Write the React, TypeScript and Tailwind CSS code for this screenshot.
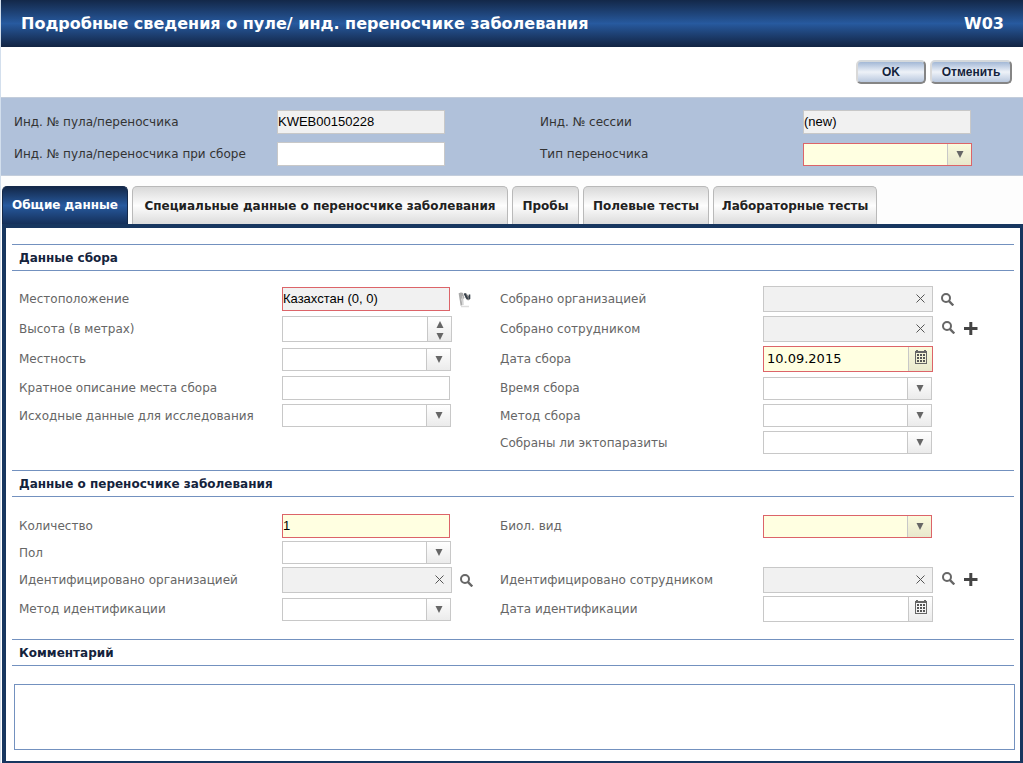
import React from 'react';

const INPUT_FONT = "font-['Liberation_Sans',Arial,sans-serif] text-[13px]";

type TextProps = { id: string; value?: string; readOnly?: boolean; required?: boolean };

function TextField({ id, value = '', readOnly, required }: TextProps) {
  const fill = readOnly ? 'bg-[#f1f1f1]' : required ? 'bg-[#ffffe1]' : 'bg-white';
  const edge = required ? 'border-[#dc6469]' : 'border-[#c8c8c8]';
  return (
    <input
      id={id}
      type="text"
      defaultValue={value}
      readOnly={readOnly}
      className={`h-6 w-[168px] border pb-px text-black outline-none ${INPUT_FONT} ${fill} ${edge}`}
    />
  );
}

function Triangle({ up = false }: { up?: boolean }) {
  return (
    <svg width="8" height="7" viewBox="0 0 8 7" aria-hidden="true">
      <path d={up ? 'M4 0 7.5 7h-7z' : 'M.5 0h7L4 7z'} fill="#666" />
    </svg>
  );
}

function SelectField({ id, required }: { id: string; required?: boolean }) {
  return (
    <div className="relative h-[23px] w-[169px]">
      <select
        id={id}
        className={`block h-full w-full appearance-none border pl-1 pr-6 outline-none ${
          required ? 'border-[#dc6469] bg-[#ffffe1]' : 'border-[#c8c8c8] bg-white'
        }`}
      >
        <option value=""></option>
      </select>
      <span
        className={`pointer-events-none absolute inset-y-px right-px flex w-6 items-center justify-center border-l border-[#c8c8c8] bg-linear-to-b ${
          required ? 'from-[#fbfbdd] to-[#e8e8cd]' : 'from-white to-[#ebebeb]'
        }`}
      >
        <Triangle />
      </span>
    </div>
  );
}

function NumberField({ id }: { id: string }) {
  return (
    <div className="flex h-[26px] w-[170px] border border-[#c8c8c8] bg-white">
      <input id={id} type="text" inputMode="numeric" className={`min-w-0 flex-1 px-1 outline-none ${INPUT_FONT}`} />
      <div className="flex w-6 flex-col border-l border-[#c8c8c8] bg-linear-to-b from-white to-[#ebebeb]">
        <button type="button" aria-label="Увеличить" className="flex h-3 items-end justify-center pb-px">
          <Triangle up />
        </button>
        <button type="button" aria-label="Уменьшить" className="flex h-3 items-end justify-center pb-px">
          <Triangle />
        </button>
      </div>
    </div>
  );
}

function CalendarIcon() {
  return (
    <svg width="12" height="14" viewBox="0 0 12 14" shapeRendering="crispEdges" aria-hidden="true">
      <path
        fill="#666"
        fillRule="evenodd"
        d="M0 1h1V0h2v1h6V0h2v1h1v13H0zM1 3v10h10V3z"
      />
      <path
        fill="#555"
        d="M2 4h2v2H2zM5 4h2v2H5zM8 4h2v2H8zM2 7h2v2H2zM5 7h2v2H5zM8 7h2v2H8zM2 10h2v2H2zM5 10h2v2H5zM8 10h2v2H8z"
      />
    </svg>
  );
}

function DateField({ id, value = '', required }: TextProps) {
  return (
    <div
      className={`flex h-[26px] w-[170px] border ${
        required ? 'border-[#dc6469] bg-[#ffffe1]' : 'border-[#c8c8c8] bg-white'
      }`}
    >
      <input
        id={id}
        type="text"
        defaultValue={value}
        className="min-w-0 flex-1 px-[3px] text-[13px] text-black outline-none"
      />
      <button
        type="button"
        aria-label="Открыть календарь"
        className={`flex w-6 justify-center border-l border-[#c8c8c8] bg-linear-to-b pt-[3px] ${
          required ? 'from-[#fbfbdd] to-[#e8e8cd]' : 'from-white to-[#ebebeb]'
        }`}
      >
        <CalendarIcon />
      </button>
    </div>
  );
}

function SearchIcon() {
  return (
    <svg width="13" height="13" viewBox="0 0 13 13" fill="none" stroke="#666" aria-hidden="true">
      <circle cx="5" cy="5" r="4" strokeWidth="2" />
      <path d="M8 8.2 12.3 12.4" strokeWidth="2.4" />
    </svg>
  );
}

function PlusIcon() {
  return (
    <svg width="14" height="13" viewBox="0 0 14 13" aria-hidden="true">
      <path d="M5.3 0h3v5H13.5v3H8.3v5h-3V8H0V5h5.3z" fill="#444" />
    </svg>
  );
}

function LookupField({ id, addable }: { id: string; addable?: boolean }) {
  return (
    <div className="flex items-center">
      <div className="flex h-[26px] w-[170px] border border-[#c8c8c8] bg-[#f1f1f1]">
        <input id={id} type="text" readOnly className={`min-w-0 flex-1 px-1 outline-none ${INPUT_FONT}`} />
        <button type="button" aria-label="Очистить" className="flex w-6 justify-center pt-[7px]">
          <svg width="9" height="9" viewBox="0 0 9 9" stroke="#555" aria-hidden="true">
            <path d="M.5.5l8 8M8.5.5l-8 8" />
          </svg>
        </button>
      </div>
      <button type="button" aria-label="Найти" className={addable ? 'ml-[9px] pb-1' : 'ml-2 pt-px'}>
        <SearchIcon />
      </button>
      {addable && (
        <button type="button" aria-label="Добавить" className="ml-[9px] pb-0.5">
          <PlusIcon />
        </button>
      )}
    </div>
  );
}

function LocationField({ id }: { id: string }) {
  return (
    <div className="flex items-center">
      <TextField id={id} value="Казахстан (0, 0)" readOnly required />
      <button type="button" aria-label="Показать на карте" className="ml-2">
        <svg width="13" height="17" viewBox="0 0 13 17" aria-hidden="true">
          <path d="M1.500 2 3.500 14.500" stroke="#aaa" strokeWidth="1.800" />
          <path d="M3 15.500h8" stroke="#ddd" strokeWidth="1.500" />
          <path d="M1 2.500c1.500-1.800 3-1 4-.5l1.500 5-1.500 1-2-.5z" fill="#aaa" />
          <path d="M6 2.500 8 2l2.500 3L12 3.500v5L10 9.500 7.500 7z" fill="#888" />
          <path d="M6.500 2.500 9.500 8M11.500 3.500v4.500" stroke="#333e48" strokeWidth="1.600" />
          <path d="M4.500 5 5 14" stroke="#ccc" strokeWidth="1.300" />
        </svg>
      </button>
    </div>
  );
}

function Label({ htmlFor, children }: { htmlFor: string; children: React.ReactNode }) {
  return (
    <label htmlFor={htmlFor} className="whitespace-nowrap leading-4">
      {children}
    </label>
  );
}

function SectionTitle({ children }: { children: React.ReactNode }) {
  return (
    <h2 className="mr-px border-y border-[#7391bf] px-[7px] pb-1 pt-[5px] text-[12px] font-bold leading-4 text-[#14233c]">
      {children}
    </h2>
  );
}

const GRID = 'grid grid-cols-[263fr_218fr_263fr_252fr] items-center pl-[7px] text-[12px] text-[#666]';

const TABS = [
  { title: 'Специальные данные о переносчике заболевания', width: 'w-[376px]' },
  { title: 'Пробы', width: 'w-[67px]' },
  { title: 'Полевые тесты', width: 'w-[126px]' },
  { title: 'Лабораторные тесты', width: 'w-[164px]' },
];

export default function App() {
  return (
    <form className="border-l border-[#d3dfed] bg-white font-['DejaVu_Sans',Verdana,sans-serif] text-[12px]">
      <header className="flex h-[47px] items-center justify-between bg-linear-to-b from-[#132849] via-[#275a9f] to-[#122443] pl-5 pr-[19px] text-[16px] font-bold text-white">
        <h1>Подробные сведения о пуле/ инд. переносчике заболевания</h1>
        <span>W03</span>
      </header>

      <div className="flex h-[50px] items-center justify-end gap-1 pr-[11px] font-['Liberation_Sans',Arial,sans-serif] text-[12px] font-bold text-[#14233c]">
        <button
          type="button"
          className="h-6 w-[70px] rounded-[5px] border-2 border-t-[#d5d9dc] border-l-[#d9d9d9] border-r-[#858585] border-b-[#858585] bg-linear-to-b from-[#a3b8d6] via-[#eef2f8] to-[#b9c8de]"
        >
          OK
        </button>
        <button
          type="button"
          className="h-6 w-[82px] rounded-[5px] border-2 border-t-[#d5d9dc] border-l-[#d9d9d9] border-r-[#858585] border-b-[#858585] bg-linear-to-b from-[#a3b8d6] via-[#eef2f8] to-[#b9c8de]"
        >
          Отменить
        </button>
      </div>

      <div className="grid grid-cols-[263fr_263fr_263fr_220fr] items-center gap-y-2 border-y border-[#c3cddb] bg-[#b0c1da] pb-[9px] pl-[13px] pt-3 text-[#333]">
        <Label htmlFor="pool-id">Инд. № пула/переносчика</Label>
        <TextField id="pool-id" value="KWEB00150228" readOnly />
        <Label htmlFor="session-id">Инд. № сессии</Label>
        <TextField id="session-id" value="(new)" readOnly />
        <Label htmlFor="field-id">Инд. № пула/переносчика при сборе</Label>
        <TextField id="field-id" />
        <Label htmlFor="vector-type">Тип переносчика</Label>
        <SelectField id="vector-type" required />
      </div>

      <div role="tablist" className="flex gap-1 bg-[#fdfdfd] pl-px pt-2.5 font-bold">
        <button
          type="button"
          role="tab"
          aria-selected="true"
          className="h-[38px] w-[126px] whitespace-nowrap rounded-t-[5px] border border-b-0 border-[#14294a] bg-linear-to-b from-[#132849] via-[#275a9f] to-[#15305a] pb-px text-white"
        >
          Общие данные
        </button>
        {TABS.map((tab) => (
          <button
            key={tab.title}
            type="button"
            role="tab"
            aria-selected="false"
            className={`h-[38px] whitespace-nowrap rounded-t-[5px] border border-b-0 border-[#b9b9b9] bg-linear-to-b from-[#d9d9d9] via-[#fdfdfd] to-[#dcdcdc] text-[#222] ${tab.width}`}
          >
            {tab.title}
          </button>
        ))}
      </div>

      <main className="ml-px border-4 border-r-3 border-b-2 border-[#17365f] pb-[11px] pl-1.5 pr-[5px] pt-4">
        <SectionTitle>Данные сбора</SectionTitle>
        <div className={`${GRID} gap-y-1 pb-4 pt-[15px]`}>
          <Label htmlFor="location">Местоположение</Label>
          <LocationField id="location" />
          <Label htmlFor="collected-org">Собрано организацией</Label>
          <LookupField id="collected-org" />

          <Label htmlFor="elevation">Высота (в метрах)</Label>
          <NumberField id="elevation" />
          <Label htmlFor="collected-person">Собрано сотрудником</Label>
          <LookupField id="collected-person" addable />

          <Label htmlFor="surroundings">Местность</Label>
          <SelectField id="surroundings" />
          <Label htmlFor="collection-date">Дата сбора</Label>
          <DateField id="collection-date" value="10.09.2015" required />

          <Label htmlFor="site-description">Кратное описание места сбора</Label>
          <TextField id="site-description" />
          <Label htmlFor="collection-time">Время сбора</Label>
          <SelectField id="collection-time" />

          <Label htmlFor="basis">Исходные данные для исследования</Label>
          <SelectField id="basis" />
          <Label htmlFor="collection-method">Метод сбора</Label>
          <SelectField id="collection-method" />

          <div className="col-start-3 flex">
            <Label htmlFor="ectoparasites">Собраны ли эктопаразиты</Label>
          </div>
          <SelectField id="ectoparasites" />
        </div>

        <SectionTitle>Данные о переносчике заболевания</SectionTitle>
        <div className={`${GRID} gap-y-[3px] pb-[17px] pt-[17px]`}>
          <Label htmlFor="quantity">Количество</Label>
          <TextField id="quantity" value="1" required />
          <Label htmlFor="species">Биол. вид</Label>
          <SelectField id="species" required />

          <Label htmlFor="sex">Пол</Label>
          <div className="col-span-3">
            <SelectField id="sex" />
          </div>

          <Label htmlFor="identified-org">Идентифицировано организацией</Label>
          <LookupField id="identified-org" />
          <Label htmlFor="identified-person">Идентифицировано сотрудником</Label>
          <LookupField id="identified-person" addable />

          <Label htmlFor="identification-method">Метод идентификации</Label>
          <SelectField id="identification-method" />
          <Label htmlFor="identification-date">Дата идентификации</Label>
          <DateField id="identification-date" />
        </div>

        <SectionTitle>Комментарий</SectionTitle>
        <div className="pl-0.5 pt-[18px]">
          <textarea
            aria-label="Комментарий"
            className="block h-[66px] w-full resize-none border border-[#7391bf] bg-white p-1 text-black outline-none"
          />
        </div>
      </main>
    </form>
  );
}
